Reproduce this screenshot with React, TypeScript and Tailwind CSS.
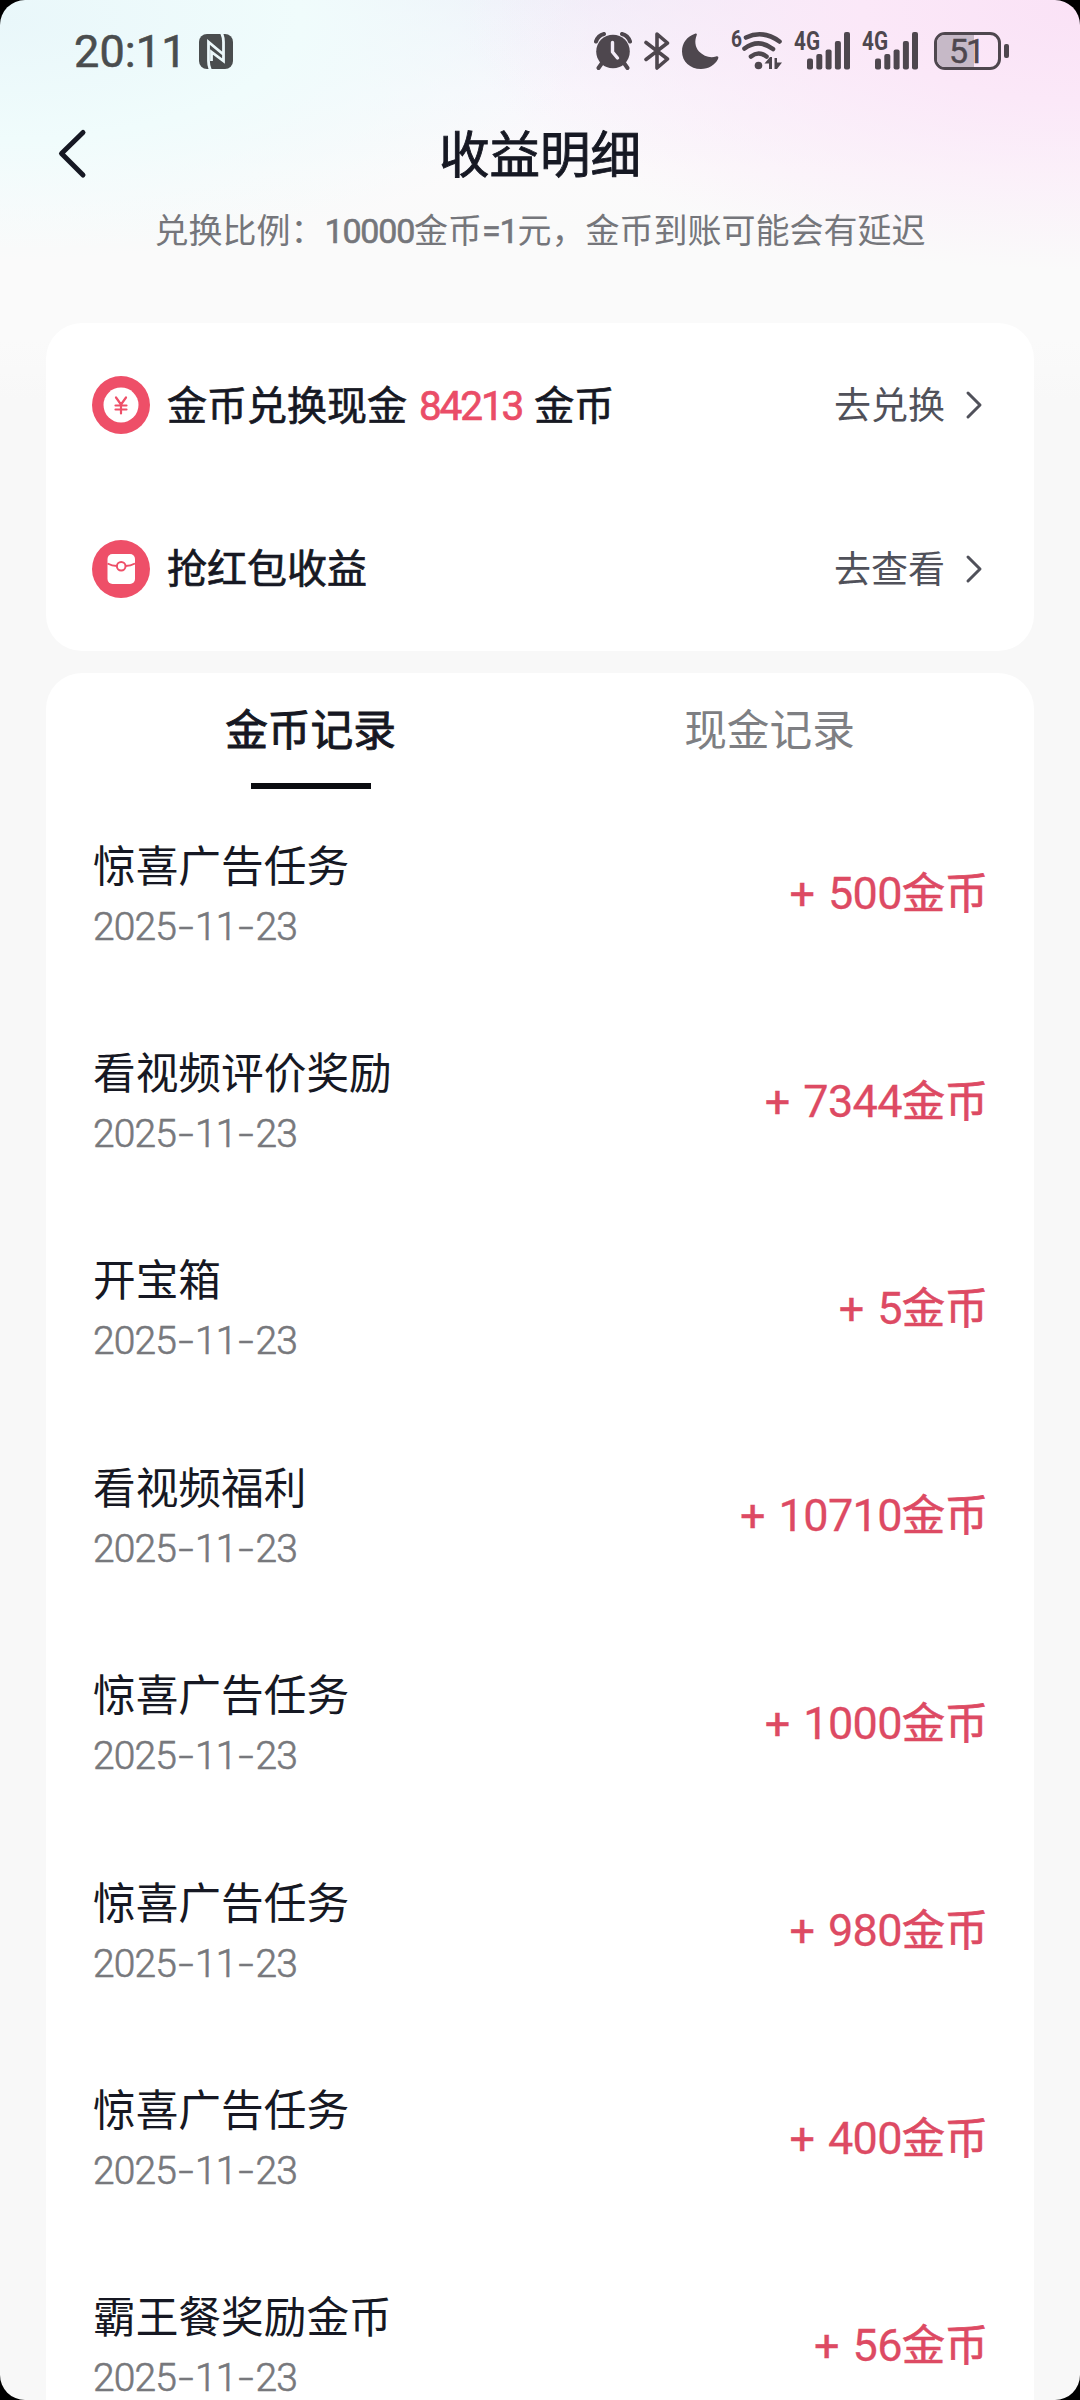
import type { ReactNode } from 'react';
import { clsx } from 'clsx';

interface CoinRecord {
  title: string;
  date: string;
  amount: number;
}

const records: CoinRecord[] = [
  { title: '惊喜广告任务', date: '2025-11-23', amount: 500 },
  { title: '看视频评价奖励', date: '2025-11-23', amount: 7344 },
  { title: '开宝箱', date: '2025-11-23', amount: 5 },
  { title: '看视频福利', date: '2025-11-23', amount: 10710 },
  { title: '惊喜广告任务', date: '2025-11-23', amount: 1000 },
  { title: '惊喜广告任务', date: '2025-11-23', amount: 980 },
  { title: '惊喜广告任务', date: '2025-11-23', amount: 400 },
  { title: '霸王餐奖励金币', date: '2025-11-23', amount: 56 }
];

export default function App() {
  return (
    <div className="w-[1080px] h-[2400px] bg-black overflow-hidden font-[Roboto,'Noto_Sans_CJK_SC',sans-serif] text-[#161823]">
      <div className="h-full flex flex-col rounded-[25px] overflow-hidden bg-[#f8f8f8] bg-[radial-gradient(ellipse_620px_260px_at_100%_10px,#fae2f6_0%,#fbe8f8_35%,#fdeefa00_100%),radial-gradient(ellipse_600px_240px_at_0%_20px,#e9f7fa_0%,#f0fcfc_50%,#f6fdfd00_100%),linear-gradient(to_bottom,#eff0f9_0px,#f8f7fc_90px,#fbfafb_170px,#fafafa_230px,#fafafa_340px,#f8f8f8_400px)]">
        <StatusBar />
        <Header />
        <main className="flex flex-col gap-[22px] px-[46px] mt-[63px]">
          <section className="rounded-[36px] bg-white">
            <EntryRow icon={<CoinIcon />} action="去兑换">
              金币兑换现金 <span className="ml-[2px] mr-[2px] text-[#ea4d67] tracking-[-2.1px] text-[40.5px]">84213</span> 金币
            </EntryRow>
            <EntryRow icon={<PacketIcon />} action="去查看">
              抢红包收益
            </EntryRow>
          </section>
          <section className="rounded-t-[36px] bg-white">
            <div className="flex px-[35px] h-[116px]">
              <Tab label="金币记录" active />
              <Tab label="现金记录" />
            </div>
            <ul className="pt-[4px]">
              {records.map((record, i) => (
                <RecordRow key={i} record={record} />
              ))}
            </ul>
          </section>
        </main>
      </div>
    </div>
  );
}

function StatusBar() {
  return (
    <div className="h-[102px] shrink-0 flex items-center justify-between pl-[74px] pr-[71px] text-[#4a4d4e]">
      <div className="flex items-center">
        <span className="w-[125px] text-[45px] leading-none tracking-[0.1px] whitespace-nowrap [-webkit-text-stroke:0.6px_currentColor]">20:11</span>
        <NfcIcon />
      </div>
      <div className="flex items-center text-[#4e474e]">
        <AlarmIcon />
        <BluetoothIcon />
        <MoonIcon />
        <WifiIcon />
        <SignalIcon />
        <SignalIcon />
        <Battery level={51} />
      </div>
    </div>
  );
}

function Header() {
  return (
    <header className="shrink-0">
      <div className="relative h-[104px] flex items-center justify-center">
        <svg className="absolute left-[56px] top-[26px]" width="32" height="52" viewBox="0 0 32 52" fill="none">
          <path d="M27 4.5 5.5 25.5 27 47" stroke="#161823" strokeWidth="5" strokeLinecap="round" strokeLinejoin="round" />
        </svg>
        <h1 className="pt-[4px] text-[50.5px] leading-none [-webkit-text-stroke:0.9px_currentColor]">收益明细</h1>
      </div>
      <p className="h-[54px] pb-[5px] flex items-center justify-center text-[34px] leading-none text-[#75767b] whitespace-nowrap">
        <span>
          兑换比例：<Strong>10000</Strong>金币<Strong>=1</Strong>元，金币到账可能会有延迟
        </span>
      </p>
    </header>
  );
}

function Strong({ children }: { children: ReactNode }) {
  return <span className="tracking-[-1.2px] [-webkit-text-stroke:0.6px_currentColor]">{children}</span>;
}

interface EntryRowProps {
  icon: ReactNode;
  action: string;
  children: ReactNode;
}

function EntryRow({ icon, action, children }: EntryRowProps) {
  return (
    <div className="h-[164px] flex items-center pl-[46px] pr-[50px]">
      {icon}
      <div className="ml-[17px] pt-[2px] text-[40px] leading-none whitespace-pre [-webkit-text-stroke:0.7px_currentColor]">{children}</div>
      <div className="ml-auto flex items-center text-[37px] leading-none text-[#50515a]">
        <span className="pt-[2px]">{action}</span>
        <svg className="ml-[19px]" width="20" height="32" viewBox="0 0 20 32" fill="none">
          <path d="M4 4 16 16 4 28" stroke="currentColor" strokeWidth="3" strokeLinecap="round" strokeLinejoin="round" />
        </svg>
      </div>
    </div>
  );
}

function Tab({ label, active = false }: { label: string; active?: boolean }) {
  return (
    <div className="flex-1 flex flex-col items-center justify-between pt-[37px]">
      <span className={clsx('text-[42.7px] leading-none', active ? '[-webkit-text-stroke:0.9px_currentColor]' : 'text-[#7e7f83]')}>{label}</span>
      {active && <span className="w-[120px] h-[6px] bg-[#0b0c10]" />}
    </div>
  );
}

function RecordRow({ record }: { record: CoinRecord }) {
  return (
    <li className="h-[207.4px] flex items-center justify-between pl-[47px] pr-[46px]">
      <div>
        <div className="text-[42.7px] leading-[60px]">{record.title}</div>
        <div className="flex text-[39px] leading-[60px] text-[#77787c] font-light tracking-[-0.9px] [-webkit-text-stroke:0.6px_currentColor]">
          {record.date.split('').map((ch, i) =>
            ch === '-' ? (
              <span key={i} className="w-[19px] text-center scale-x-[1.4]">{ch}</span>
            ) : (
              <span key={i}>{ch}</span>
            )
          )}
        </div>
      </div>
      <div className="pb-[6px] text-[43px] leading-none text-[#dd4a63] [-webkit-text-stroke:0.7px_currentColor]">
        <span className="text-[45px] tracking-[-0.6px] [word-spacing:3px] [-webkit-text-stroke:0.3px_currentColor]">+ {record.amount}</span>金币
      </div>
    </li>
  );
}

function CoinIcon() {
  return (
    <svg width="58" height="58" viewBox="0 0 58 58" fill="none">
      <circle cx="29" cy="29" r="29" fill="#ee4f68" />
      <circle cx="29" cy="29" r="17.5" fill="#fff" />
      <path d="M24 21.5 29 28.5 34 21.5M29 28.5V37.5M23.5 29.5H34.5M23.5 33.5H34.5" stroke="#ee4f68" strokeWidth="2.2" strokeLinecap="round" />
    </svg>
  );
}

function PacketIcon() {
  return (
    <svg width="58" height="58" viewBox="0 0 58 58" fill="none">
      <circle cx="29" cy="29" r="29" fill="#ee4f68" />
      <rect x="15.5" y="14" width="27.5" height="30" rx="5" fill="#fff" />
      <path d="M15.5 23.5Q20 26 25 26M43 23.5Q38.5 26 33.5 26" stroke="#ee4f68" strokeWidth="2" />
      <circle cx="29.2" cy="26.2" r="4.3" fill="#fff" stroke="#ee4f68" strokeWidth="2" />
    </svg>
  );
}

function NfcIcon() {
  return (
    <svg width="34" height="35" viewBox="0 0 34 35" fill="none">
      <rect width="34" height="35" rx="8" fill="currentColor" />
      <path d="M11.5 36Q9.5 32 9.5 27V8L24.5 20.5M22.5 -1Q24.5 3 24.5 8V27L12.5 18V27" stroke="#ecf8fa" strokeWidth="2.8" />
    </svg>
  );
}

function AlarmIcon() {
  return (
    <svg width="38" height="38" viewBox="0 0 38 38" fill="none">
      <circle cx="19" cy="19.5" r="16.8" fill="currentColor" />
      <path d="M2 9.5Q4 3.5 10 2M36 9.5Q34 3.5 28 2" stroke="currentColor" strokeWidth="4" strokeLinecap="round" />
      <path d="M8 31 4.5 36M30 31 33.5 36" stroke="currentColor" strokeWidth="4" strokeLinecap="round" />
      <path d="M18.5 10.5V20L23.5 26" stroke="#f3ecf8" strokeWidth="3.4" strokeLinecap="round" strokeLinejoin="round" />
    </svg>
  );
}

function BluetoothIcon() {
  return (
    <svg className="ml-[12px]" width="26" height="38" viewBox="0 0 26 38" fill="none">
      <path d="M2 10.5 23.5 27 13 36V2L23.5 11 2 27.5" stroke="currentColor" strokeWidth="3.6" strokeLinecap="round" strokeLinejoin="round" />
    </svg>
  );
}

function MoonIcon() {
  return (
    <svg className="ml-[12px]" width="37" height="36" viewBox="0 0 37 36" fill="currentColor">
      <path d="M13 .8C14.5 .2 15.5 1 14.5 2.8C12.5 8 13 14 17 18.5C21.5 23 28 25.5 34 23.5C36 23 37 24 36 26C33 32 26.5 36 19 36C8 36 0 28.5 0 18.5C0 10 5 3.5 13 .8Z" />
    </svg>
  );
}

function WifiIcon() {
  return (
    <svg className="ml-[12px]" width="51" height="62" viewBox="0 -10 51 62" fill="none">
      <text x="0" y="17" fontSize="23" fontWeight="700" fill="currentColor" textLength="11" lengthAdjust="spacingAndGlyphs">6</text>
      <g stroke="currentColor" strokeWidth="4.6" strokeLinecap="round">
        <path d="M15 7.5Q32 -.5 48.5 11.5" />
        <path d="M13.5 18.5Q27.5 8 42 19" />
        <path d="M20 26.5Q27.5 20.5 35.5 26.5" />
      </g>
      <circle cx="27.5" cy="35.5" r="3.8" fill="currentColor" />
      <path d="M41 27V39H38V33.5H33.5L39 27ZM43.5 39V28H46V32.5H51L46 39Z" fill="currentColor" />
    </svg>
  );
}

function SignalIcon() {
  return (
    <svg className="ml-[12px]" width="56" height="62" viewBox="0 -12 56 62" fill="currentColor">
      <text x="0" y="18" fontSize="25" fontWeight="700" textLength="26" lengthAdjust="spacingAndGlyphs">4G</text>
      <rect x="13" y="26.5" width="6" height="11" rx="2" />
      <rect x="22.3" y="22" width="6" height="15.5" rx="2" />
      <rect x="31.6" y="17.5" width="6" height="20" rx="2" />
      <rect x="40.9" y="9" width="6" height="28.5" rx="2" />
      <rect x="50" y="0" width="6" height="37.5" rx="2" />
    </svg>
  );
}

function Battery({ level }: { level: number }) {
  return (
    <div className="ml-[16px] flex items-center gap-[3px]">
      <div className="relative w-[67px] h-[38px] rounded-[11px] border-[3.5px] border-current overflow-hidden flex items-center justify-center">
        <div className="absolute inset-y-0 left-0 bg-[#c6b9c7]" style={{ width: `${level + 9}%` }} />
        <span className="relative h-[30px] pr-[3px] text-[34px] leading-[31px] tracking-[-2px] [-webkit-text-stroke:0.5px_currentColor]">{level}</span>
      </div>
      <div className="w-[5px] h-[14px] rounded-[2px] bg-current" />
    </div>
  );
}
